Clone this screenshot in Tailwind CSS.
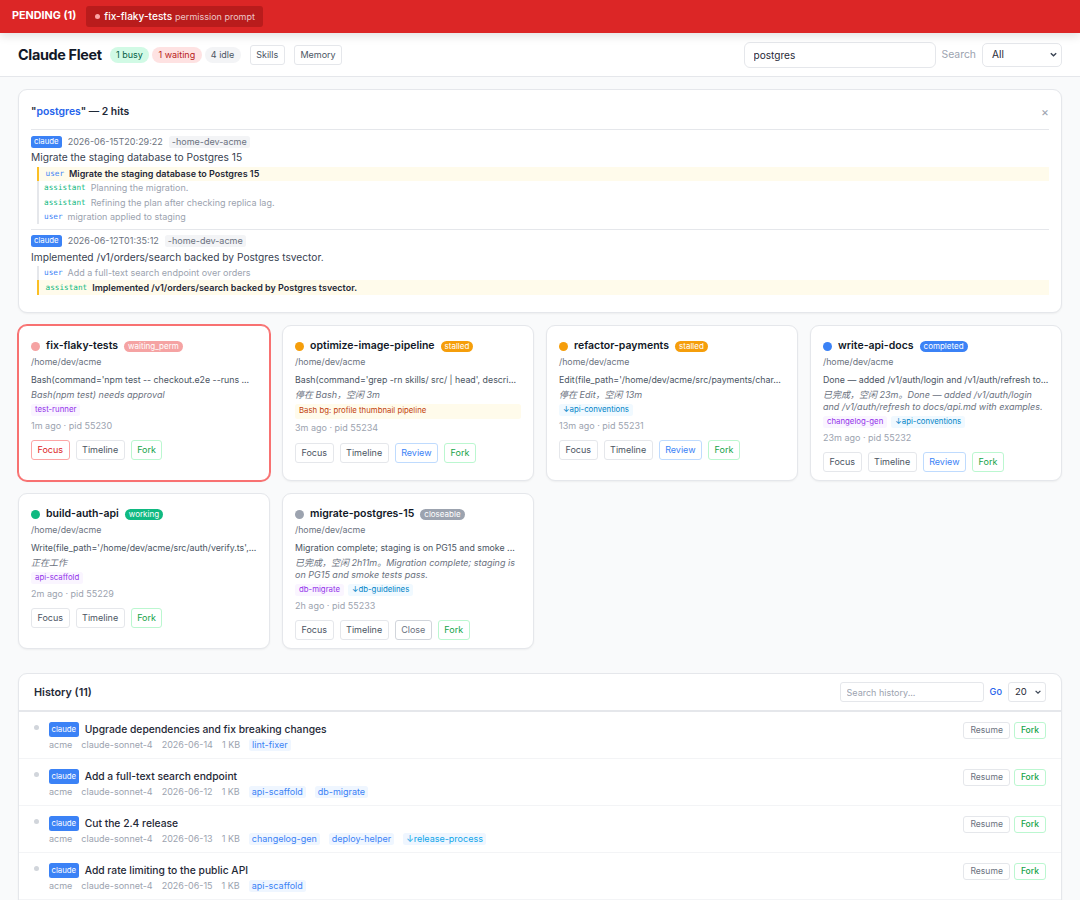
<!DOCTYPE html>
<html lang="en">
	<head>
		<meta charset="UTF-8" />
		<meta name="viewport" content="width=device-width, initial-scale=1.0" />
		<title>Claude Fleet</title>
		<script src="https://cdn.jsdelivr.net/npm/@tailwindcss/browser@4"></script>
	</head>
	<body class="h-[900px] overflow-hidden bg-[#f9fafb] font-['Inter','Noto_Sans_CJK_SC',sans-serif] text-[#1f2937]">
		<!-- Pending banner -->
		<div class="relative z-10 flex h-[33px] items-center gap-[10px] bg-[#dc2626] pl-3 text-white shadow-[0_3px_9px_rgba(0,0,0,0.12)]">
			<span class="text-[10.8px] font-bold">PENDING (1)</span>
			<div class="flex h-[21px] w-[177px] items-center rounded-[3px] bg-[#b91c1c] pl-[9px]">
				<span class="mr-1 h-[5px] w-[5px] rounded-full bg-[#fca5a5]"></span>
				<span class="text-[10.1px] font-medium">fix-flaky-tests</span>
				<span class="ml-[3px] text-[9px] text-white/75">permission prompt</span>
			</div>
		</div>

		<!-- Header -->
		<header class="flex h-[44px] items-center border-b border-[#e5e7eb] bg-white pr-[18px] pl-[18px]">
			<h1 class="mr-2 text-[14.4px] font-bold tracking-[-0.33px] text-[#111827]">Claude Fleet</h1>
			<span class="mr-[3px] flex h-4 items-center rounded-full bg-[#d1fae5] px-[6.3px] text-[9px] text-[#065f46]">1 busy</span>
			<span class="mr-[3px] flex h-4 items-center rounded-full bg-[#fee2e2] px-[6.3px] text-[9px] text-[#b91c1c]">1 waiting</span>
			<span class="mr-[9px] flex h-4 items-center rounded-full bg-[#f3f4f6] px-[6.3px] text-[9px] text-[#4b5563]">4 idle</span>
			<button class="mr-[9px] h-5 rounded-[3px] border border-[#e5e7eb] px-[5.6px] text-[9px] text-[#4b5563]">Skills</button>
			<button class="h-5 rounded-[3px] border border-[#e5e7eb] px-[5.6px] text-[9px] text-[#4b5563]">Memory</button>
			<div class="ml-auto flex items-center">
				<input value="postgres" class="h-[26px] w-[192px] rounded-[6px] border border-[#e5e7eb] px-[9px] text-[10.1px] text-[#1f2937]" />
				<span class="mr-[6px] ml-[6px] text-[10.4px] text-[#9ca3af]">Search</span>
				<div class="flex h-6 w-[80px] items-center justify-between rounded-[5px] border border-[#e5e7eb] pr-[3px] pl-[9px] text-[10.1px] text-[#1f2937]">
					<span>All</span>
					<svg width="9" height="9" viewBox="0 0 10 10" fill="none" stroke="#374151" stroke-width="1.5"><path d="M2 3.5 5 6.5 8 3.5" /></svg>
				</div>
			</div>
		</header>

		<main class="px-[18px] pt-3">
			<!-- Search results -->
			<section class="h-[224px] rounded-[9px] border border-[#e5e7eb] bg-white px-3 shadow-[0_1px_2px_rgba(0,0,0,0.05)]">
				<div class="flex h-[40px] items-center justify-between border-b border-[#e5e7eb] pt-[4px]">
					<h2 class="text-[10.4px] font-semibold text-[#1f2937]">"<span class="text-[#2563eb]">postgres</span>" — 2 hits</h2>
					<span class="text-[12px] leading-none text-[#9ca3af]">×</span>
				</div>
				<div id="hits"></div>
			</section>

			<!-- Session cards -->
			<div id="cards" class="mt-3 grid grid-cols-4 gap-3"></div>

			<!-- History -->
			<section class="mt-6 h-[400px] rounded-[9px] border border-[#e5e7eb] bg-white shadow-[0_1px_2px_rgba(0,0,0,0.05)]">
				<div class="flex h-[38px] items-center border-b-2 border-[#e5e7eb] pr-[15px] pl-[15px]">
					<h2 class="pt-[2px] text-[10.8px] font-semibold text-[#1f2937]">History (11)</h2>
					<input placeholder="Search history..." class="ml-auto h-5 w-[144px] rounded-[3px] border border-[#e5e7eb] px-[6px] text-[9px] placeholder:text-[#9ca3af]" />
					<span class="mx-[6px] text-[9.2px] font-medium text-[#2563eb]">Go</span>
					<div class="flex h-5 w-[38px] items-center justify-between rounded-[3px] border border-[#e5e7eb] pr-[3px] pl-[6px] text-[9.5px] text-[#1f2937]">
						<span>20</span>
						<svg width="8" height="8" viewBox="0 0 10 10" fill="none" stroke="#374151" stroke-width="1.5"><path d="M2 3.5 5 6.5 8 3.5" /></svg>
					</div>
				</div>
				<div id="history"></div>
			</section>
		</main>

		<script>
			const hits = [
				{
					date: "2026-06-15T20:29:22",
					title: "Migrate the staging database to Postgres 15",
					lines: [
						["user", "Migrate the staging database to Postgres 15", true],
						["assistant", "Planning the migration."],
						["assistant", "Refining the plan after checking replica lag."],
						["user", "migration applied to staging"],
					],
				},
				{
					date: "2026-06-12T01:35:12",
					title: "Implemented /v1/orders/search backed by Postgres tsvector.",
					lines: [
						["user", "Add a full-text search endpoint over orders"],
						["assistant", "Implemented /v1/orders/search backed by Postgres tsvector.", true],
					],
				},
			];

			const cards = [
				{ name: "fix-flaky-tests", status: "waiting_perm", dot: "bg-[#f5a3a3]", pill: "bg-[#f5a3a3]", tool: "Bash(command='npm test -- checkout.e2e --runs ...", note: "Bash(npm test) needs approval", tags: [["test-runner", 0]], meta: "1m ago · pid 55230", focusRed: true, selected: true },
				{ name: "optimize-image-pipeline", status: "stalled", dot: "bg-[#f59e0b]", pill: "bg-[#f59e0b]", tool: "Bash(command='grep -rn skills/ src/ | head', descri...", note: "停在 Bash，空闲 3m", bg: "Bash bg: profile thumbnail pipeline", tags: [], meta: "3m ago · pid 55234", review: true },
				{ name: "refactor-payments", status: "stalled", dot: "bg-[#f59e0b]", pill: "bg-[#f59e0b]", tool: "Edit(file_path='/home/dev/acme/src/payments/char...", note: "停在 Edit，空闲 13m", tags: [["↓api-conventions", 1]], meta: "13m ago · pid 55231", review: true },
				{ name: "write-api-docs", status: "completed", dot: "bg-[#3b82f6]", pill: "bg-[#3b82f6]", tool: "Done — added /v1/auth/login and /v1/auth/refresh to...", note: "已完成，空闲 23m。Done — added /v1/auth/login and /v1/auth/refresh to docs/api.md with examples.", tags: [["changelog-gen", 0], ["↓api-conventions", 1]], meta: "23m ago · pid 55232", review: true },
				{ name: "build-auth-api", status: "working", dot: "bg-[#10b981]", pill: "bg-[#10b981]", tool: "Write(file_path='/home/dev/acme/src/auth/verify.ts',...", note: "正在工作", tags: [["api-scaffold", 0]], meta: "2m ago · pid 55229" },
				{ name: "migrate-postgres-15", status: "closeable", dot: "bg-[#9ca3af]", pill: "bg-[#9ca3af]", tool: "Migration complete; staging is on PG15 and smoke ...", note: "已完成，空闲 2h11m。Migration complete; staging is on PG15 and smoke tests pass.", tags: [["db-migrate", 0], ["↓db-guidelines", 1]], meta: "2h ago · pid 55233", close: true },
			];

			const history = [
				{ title: "Upgrade dependencies and fix breaking changes", date: "2026-06-14", chips: ["lint-fixer"] },
				{ title: "Add a full-text search endpoint", date: "2026-06-12", chips: ["api-scaffold", "db-migrate"] },
				{ title: "Cut the 2.4 release", date: "2026-06-13", chips: ["changelog-gen", "deploy-helper", "↓release-process"] },
				{ title: "Add rate limiting to the public API", date: "2026-06-15", chips: ["api-scaffold"] },
			];

			function hitLine([role, text, match]) {
				const roleColor = role === "user" ? "text-[#3b82f6]" : "text-[#10b981]";
				const rowClass = match
					? "border-l-2 border-[#fbbf24] bg-[#fffbeb] pl-[6.5px]"
					: "border-l-2 border-[#e5e7eb] pl-[5px]";
				const textClass = match ? "font-semibold text-[#1f2937]" : "text-[#9ca3af]";
				return `<div class="flex h-[14.4px] items-center ${rowClass}">
					<span class="mr-[5px] font-['DejaVu_Sans_Mono',monospace] text-[7.7px] ${roleColor}">${role}</span>
					<span class="text-[9px] ${textClass}">${text}</span>
				</div>`;
			}

			function renderHits() {
				document.getElementById("hits").innerHTML = hits
					.map(
						(hit, i) => `<div class="${i === 0 ? "h-[100px] border-b border-[#e5e7eb] pt-[5px]" : "pt-[4.5px]"}">
						<div class="flex h-[13px] items-center">
							<span class="flex h-3 items-center rounded-[2.5px] bg-[#3b82f6] px-[3px] text-[7.8px] text-white">claude</span>
							<span class="ml-[6px] text-[9px] text-[#6b7280]">${hit.date}</span>
							<span class="ml-[6px] flex h-3 items-center rounded-[2.5px] bg-[#f3f4f6] px-[3px] text-[9px] text-[#6b7280]">-home-dev-acme</span>
						</div>
						<div class="mt-[1px] h-[16px] text-[10.2px] leading-[16px] text-[#374151]">${hit.title}</div>
						<div class="mt-[1.5px] ml-[6px]">${hit.lines.map(hitLine).join("")}</div>
					</div>`
					)
					.join("");
			}

			function cardButton(label, colors) {
				return `<button class="h-5 rounded-[3px] border px-[5.5px] text-[9px] ${colors}">${label}</button>`;
			}

			function renderCards() {
				document.getElementById("cards").innerHTML = cards
					.map((c) => {
						const cardClass = c.selected
							? "border-[#f87171] ring-1 ring-[#f87171] rounded-[9px]"
							: "border-[#e5e7eb] rounded-[9px]";
						const tags = c.tags
							.map(([t, down]) => {
								const tone = down ? "bg-[#f0f9ff] text-[#0284c7]" : "bg-[#faf5ff] text-[#9333ea]";
								return `<span class="flex h-[12px] items-center rounded-[2.5px] px-1 text-[7.8px] ${tone}">${t}</span>`;
							})
							.join("");
						const extraBtn = c.review
							? cardButton("Review", "border-[#bfdbfe] text-[#3b82f6]")
							: c.close
							? cardButton("Close", "border-[#d1d5db] text-[#6b7280]")
							: "";
						return `<article class="h-[156px] border bg-white p-3 shadow-[0_1px_2px_rgba(0,0,0,0.05)] ${cardClass}">
							<div class="flex h-[16px] items-center">
								<span class="mr-[6px] h-[9px] w-[9px] shrink-0 rounded-full ${c.dot}"></span>
								<span class="text-[10.5px] font-semibold text-[#111827]">${c.name}</span>
								<span class="ml-[6px] flex h-[11px] items-center rounded-full px-1 text-[8px] text-white ${c.pill}">${c.status}</span>
							</div>
							<div class="mt-[1px] h-[13px] text-[8.8px] leading-[13px] text-[#6b7280]">/home/dev/acme</div>
							<div class="mt-[5px] h-[15.5px] text-[8.8px] leading-[14px] whitespace-nowrap text-[#4b5563]">${c.tool}</div>
							<div class="text-[9px] leading-[12px] text-[#6b7280] italic">${c.note}</div>
							${c.bg ? `<div class="mt-[3px] flex h-[15px] items-center rounded-[2.5px] bg-[#fffbeb] px-1 text-[7.8px] text-[#c2410c]">${c.bg}</div>` : ""}
							${tags ? `<div class="mt-[3px] flex gap-1">${tags}</div>` : ""}
							<div class="${c.bg ? "mt-[2px]" : "mt-[3px]"} h-[14px] text-[9px] leading-[14px] text-[#9ca3af]">${c.meta}</div>
							<div class="${c.bg ? "mt-[8.5px]" : "mt-[7.5px]"} flex gap-[6px]">
								${cardButton("Focus", c.focusRed ? "border-[#fca5a5] text-[#dc2626]" : "border-[#e5e7eb] text-[#4b5563]")}
								${cardButton("Timeline", "border-[#e5e7eb] text-[#4b5563]")}
								${extraBtn}
								${cardButton("Fork", "border-[#bbf7d0] text-[#16a34a]")}
							</div>
						</article>`;
					})
					.join("");
			}

			function renderHistory() {
				document.getElementById("history").innerHTML = history
					.map(
						(row) => `<div class="flex h-[47px] border-b border-[#f3f4f6] pt-[10px] pr-[15px] pl-[15px]">
						<span class="mt-[3px] mr-[10px] h-[5px] w-[5px] shrink-0 rounded-full bg-[#d1d5db]"></span>
						<div>
							<div class="flex h-[15px] items-center">
								<span class="flex h-[15px] items-center rounded-[2.5px] bg-[#3b82f6] px-[2.5px] text-[7.8px] text-white">claude</span>
								<span class="ml-[6px] text-[10.3px] font-medium text-[#1f2937]">${row.title}</span>
							</div>
							<div class="mt-[1px] flex h-[14px] items-center gap-[9px] text-[9px] text-[#9ca3af]">
								<span>acme</span><span>claude-sonnet-4</span><span>${row.date}</span><span>1 KB</span>
								${row.chips
									.map((chip) => {
										const tone = chip.startsWith("↓") ? "text-[#0ea5e9]" : "text-[#3b82f6]";
										return `<span class="flex h-3 items-center rounded-[2.5px] bg-[#eff6ff] px-[3px] ${tone}">${chip}</span>`;
									})
									.join("")}
							</div>
						</div>
						<div class="ml-auto flex h-[17px] gap-1">
							<button class="rounded-[3px] border border-[#e5e7eb] px-[6px] text-[8.55px] text-[#6b7280]">Resume</button>
							<button class="rounded-[3px] border border-[#bbf7d0] px-[6px] text-[8.55px] font-medium text-[#16a34a]">Fork</button>
						</div>
					</div>`
					)
					.join("");
			}

			renderHits();
			renderCards();
			renderHistory();
		</script>
	</body>
</html>
